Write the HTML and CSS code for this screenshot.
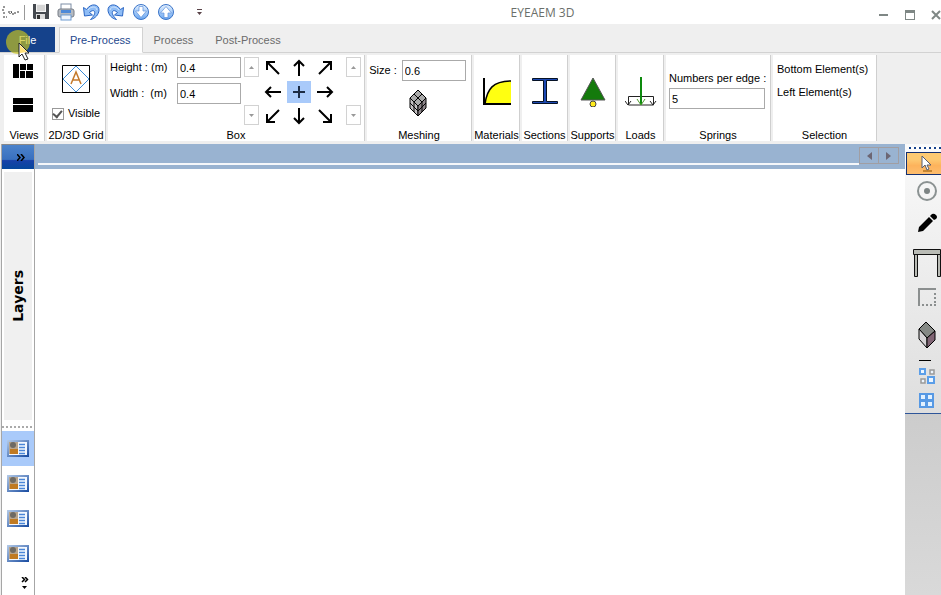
FILE: index.html
```html
<!DOCTYPE html>
<html lang="en">
<head>
    <meta charset="UTF-8">
    <meta name="viewport" content="width=device-width, initial-scale=1.0">
    <title>EYEAEM 3D</title>
    <link rel="stylesheet" href="styles.css">
</head>
<body>
    <svg class="defs" aria-hidden="true">
        <linearGradient id="blue" x1="0" y1="0" x2="0" y2="1">
            <stop offset="0" stop-color="#e6f2ff"/>
            <stop offset="1" stop-color="#68a5f0"/>
        </linearGradient>
        <linearGradient id="card-edge" x1="0" y1="0" x2="1" y2="1">
            <stop offset="0" stop-color="#b5cbe8"/>
            <stop offset="1" stop-color="#164aa0"/>
        </linearGradient>
        <symbol id="arrow" viewBox="0 0 18 18">
            <path d="M9 17V2M4 7l5-5 5 5" fill="none" stroke="#000" stroke-width="2"/>
        </symbol>
        <symbol id="arrow-diag" viewBox="0 0 18 18">
            <path d="M3 15L15 3M7 3h8v8" fill="none" stroke="#000" stroke-width="2"/>
        </symbol>
        <symbol id="undo" viewBox="0 0 18 18">
            <path d="M1.500 4.500l1 8.500 8-1-3-2.500c2-2 4-2.500 5-1 1 2-1 5-4 8 5-1 8-5 8.500-9C17.500 1 9-.5 4.500 6.500z" fill="#8fbdf6" stroke="#2b66c4"/>
            <path d="M6 7c3-4 8-4 9 0" fill="none" stroke="#d3e6fd"/>
        </symbol>
        <symbol id="card" viewBox="0 0 22 17">
            <rect width="22" height="17" fill="url(#card-edge)"/>
            <rect x="2" y="2" width="18" height="13" fill="#f4f8fe"/>
            <rect x="2" y="2" width="9" height="12" fill="#b9a58c"/>
            <circle cx="6" cy="5" r="3" fill="#6e6a63"/>
            <rect x="3" y="9" width="8" height="5" fill="#c07a22"/>
            <path d="M12 4.500h6M12 7.500h6M12 10.500h6M12 13.500h6" stroke="#4a86d8" stroke-width="1.500"/>
        </symbol>
    </svg>

    <header class="titlebar">
        <div class="quick">
            <svg class="logo" width="17" height="14" viewBox="0 0 17 14" aria-hidden="true">
                <path d="M1 2h3M0 5h2M1 8h3M1 12h4M6 7h2v2M9 6l1 3M10 9h2M13 7v2h1M16 6v3" fill="none" stroke="#333" stroke-dasharray="2 1"/>
            </svg>
            <span class="rule"></span>
            <button aria-label="Save">
                <svg width="18" height="18" viewBox="0 0 18 18">
                    <path d="M1 1h16v15H2l-1-1z" fill="#44484e"/>
                    <rect x="4" y="1" width="10" height="8" fill="#f5f5f5"/>
                    <path d="M5 3h8M5 5h8M5 7h8" stroke="#b5b5b5"/>
                    <rect x="4" y="11" width="9" height="5" fill="#dcdcdc"/>
                    <rect x="5" y="12" width="3" height="4" fill="#333"/>
                </svg>
            </button>
            <button aria-label="Print">
                <svg width="18" height="18" viewBox="0 0 18 18">
                    <rect x="4" y="1" width="10" height="7" fill="#fff" stroke="#7d8da5"/>
                    <rect x="1" y="6" width="16" height="8" rx="2" fill="#b5bac1" stroke="#777d86"/>
                    <rect x="4" y="7" width="10" height="3" fill="#4c89d8"/>
                    <rect x="4" y="12" width="10" height="5" fill="#eef5fd" stroke="#6e9bd0"/>
                </svg>
            </button>
            <button aria-label="Undo"><svg width="18" height="18"><use href="#undo"/></svg></button>
            <button aria-label="Redo"><svg class="flip" width="18" height="18"><use href="#undo"/></svg></button>
            <button aria-label="Download">
                <svg width="18" height="18" viewBox="0 0 18 18">
                    <circle cx="9" cy="9" r="7.500" fill="url(#blue)" stroke="#3b74c8"/>
                    <path d="M7 3.500h4V8h3.500L9 14.500 3.500 8H7z" fill="#fff" stroke="#5b8fdc" stroke-width=".7"/>
                </svg>
            </button>
            <button aria-label="Upload">
                <svg width="18" height="18" viewBox="0 0 18 18">
                    <circle cx="9" cy="9" r="7.500" fill="url(#blue)" stroke="#3b74c8"/>
                    <path d="M7 14.500h4V10h3.500L9 3.500 3.500 10H7z" fill="#fff" stroke="#5b8fdc" stroke-width=".7"/>
                </svg>
            </button>
            <button class="more" aria-label="Customize toolbar">
                <svg width="5" height="6" viewBox="0 0 5 6"><path d="M0 0h5v1H0zM0 3h5L2.500 6z" fill="#5a4348"/></svg>
            </button>
        </div>
        <h1>EYEAEM 3D</h1>
        <div class="window-buttons">
            <button aria-label="Minimize"><svg width="10" height="10"><path d="M0 4h9v2H0z" fill="#7f8785"/></svg></button>
            <button aria-label="Maximize"><svg width="10" height="10"><path d="M0 0h10v10H0zM1 3v6h8V3z" fill="#7f8785" fill-rule="evenodd"/></svg></button>
            <button aria-label="Close"><svg width="10" height="10"><path d="M1 1l8 8M9 1L1 9" stroke="#7f8785" stroke-width="2"/></svg></button>
        </div>
    </header>

    <nav class="tabs">
        <button class="file">File
            <svg class="pointer" width="26" height="34" viewBox="0 0 26 34" aria-hidden="true">
                <circle cx="12" cy="14" r="12" fill="#c8c21e" fill-opacity=".68"/>
                <path d="M13 15v14l3-3 3 6 3-1-3-6h4z" fill="#fff" stroke="#222"/>
                <path d="M14 17v8l7-1z" fill="#ffe07a"/>
            </svg>
        </button>
        <button class="active">Pre-Process</button>
        <button>Process</button>
        <button>Post-Process</button>
    </nav>

    <div class="ribbon">
        <section class="group views">
            <div class="body">
                <button aria-label="Tile views"><svg width="20" height="14"><path d="M0 0h6v14H0zM7 0h6v6H7zM14 0h6v6h-6zM7 7h5v7H7zM13 7h7v7h-7z"/></svg></button>
                <button aria-label="Stack views"><svg width="20" height="14"><path d="M0 0h20v6H0zM0 7h20v7H0z"/></svg></button>
            </div>
            <h2>Views</h2>
        </section>
        <section class="group grid">
            <div class="body">
                <button aria-label="Grid">
                    <svg width="28" height="28" viewBox="0 0 28 28" fill="none">
                        <path d="M.5.5h27v27H.5z" stroke="#000"/>
                        <path d="M14 1l13 13-13 13L1 14z" stroke="#3b8bd6"/>
                        <path d="M9 19l5-12 5 12M11 15h6" stroke="#c47a2c" stroke-width="1.500"/>
                    </svg>
                </button>
                <label><input type="checkbox" checked> Visible</label>
            </div>
            <h2>2D/3D Grid</h2>
        </section>
        <section class="group box">
            <div class="body">
                <div class="fields">
                    <label for="height">Height : (m)</label><input id="height" type="text" value="0.4">
                    <label for="width">Width :&nbsp; (m)</label><input id="width" type="text" value="0.4">
                </div>
                <div class="spin">
                    <button aria-label="Scroll up"><svg width="5" height="3"><path d="M0 3h5L2.500 0z"/></svg></button>
                    <button aria-label="Scroll down"><svg width="5" height="3"><path d="M0 0h5L2.500 3z"/></svg></button>
                </div>
                <div class="arrows">
                    <button aria-label="Up left"><svg class="r270" width="18" height="18"><use href="#arrow-diag"/></svg></button>
                    <button aria-label="Up"><svg width="18" height="18"><use href="#arrow"/></svg></button>
                    <button aria-label="Up right"><svg width="18" height="18"><use href="#arrow-diag"/></svg></button>
                    <button aria-label="Left"><svg class="r270" width="18" height="18"><use href="#arrow"/></svg></button>
                    <button class="on" aria-label="Center"><svg width="18" height="18"><path d="M9 3v12M3 9h12" stroke="#1c2b44" stroke-width="2"/></svg></button>
                    <button aria-label="Right"><svg class="r90" width="18" height="18"><use href="#arrow"/></svg></button>
                    <button aria-label="Down left"><svg class="turn" width="18" height="18"><use href="#arrow-diag"/></svg></button>
                    <button aria-label="Down"><svg class="turn" width="18" height="18"><use href="#arrow"/></svg></button>
                    <button aria-label="Down right"><svg class="r90" width="18" height="18"><use href="#arrow-diag"/></svg></button>
                </div>
                <div class="spin">
                    <button aria-label="Scroll up"><svg width="5" height="3"><path d="M0 3h5L2.500 0z"/></svg></button>
                    <button aria-label="Scroll down"><svg width="5" height="3"><path d="M0 0h5L2.500 3z"/></svg></button>
                </div>
            </div>
            <h2>Box</h2>
        </section>
        <section class="group meshing">
            <div class="body">
                <div class="row"><label for="size">Size :</label><input id="size" type="text" value="0.6"></div>
                <button aria-label="Mesh">
                    <svg width="18" height="28" viewBox="0 0 18 28" stroke="#000">
                        <path d="M9 1l8 8-8 8-8-8z" fill="#aaa"/>
                        <path d="M1 9l8 8v10l-8-8z" fill="#c4c0c2"/>
                        <path d="M17 9l-8 8v10l8-8z" fill="#8d858a"/>
                        <path d="M5 5l8 8v10M13 5l-8 8v10M1 14l8 8 8-8" fill="none"/>
                    </svg>
                </button>
            </div>
            <h2>Meshing</h2>
        </section>
        <section class="group tool">
            <div class="body">
                <button aria-label="Materials">
                    <svg width="28" height="30" viewBox="0 0 28 30">
                        <path d="M2 27C4 12 10 4 28 4v23z" fill="#ff1"/>
                        <path d="M2 27C4 12 10 4 28 4" fill="none" stroke="#000" stroke-width="1.500"/>
                        <path d="M1 1v26h27" fill="none" stroke="#000" stroke-width="2"/>
                    </svg>
                </button>
            </div>
            <h2>Materials</h2>
        </section>
        <section class="group tool">
            <div class="body">
                <button aria-label="Sections">
                    <svg width="28" height="30" viewBox="0 0 28 30">
                        <path d="M1.500 1.500h25v2h-11v21h11v2h-25v-2h11v-21h-11z" fill="#1c49b4" stroke="#061225"/>
                    </svg>
                </button>
            </div>
            <h2>Sections</h2>
        </section>
        <section class="group tool">
            <div class="body">
                <button aria-label="Supports">
                    <svg width="28" height="30" viewBox="0 0 28 30">
                        <path d="M14 1l12 22H2z" fill="#147a0c" stroke="#555"/>
                        <circle cx="14" cy="27" r="3" fill="#ffeb1c" stroke="#444"/>
                    </svg>
                </button>
            </div>
            <h2>Supports</h2>
        </section>
        <section class="group tool">
            <div class="body">
                <button aria-label="Loads">
                    <svg width="32" height="30" viewBox="0 0 32 30" fill="none">
                        <path d="M3.500 28V19.500h25V28zM0 24l3 4 3-4M25 24l3 4 3-4" stroke="#222"/>
                        <path d="M16 0v28" stroke="#0d8a0d" stroke-width="2"/>
                        <path d="M12 22l4 6 4-6" stroke="#4d9a2d"/>
                    </svg>
                </button>
            </div>
            <h2>Loads</h2>
        </section>
        <section class="group springs">
            <div class="body">
                <label for="edges">Numbers per edge :</label>
                <input id="edges" type="text" value="5">
            </div>
            <h2>Springs</h2>
        </section>
        <section class="group selection">
            <div class="body">
                <button>Bottom Element(s)</button>
                <button>Left Element(s)</button>
            </div>
            <h2>Selection</h2>
        </section>
    </div>

    <main>
        <aside class="sidebar">
            <button class="expand" aria-label="Expand panel"><svg width="8" height="7"><path d="M0 0l3 3.500-3 3.500M4 0l3 3.500-3 3.500" fill="none" stroke="#000" stroke-width="1.500"/></svg></button>
            <button class="layers">Layers</button>
            <div class="splitter"></div>
            <button class="item on" aria-label="Panel 1"><svg width="22" height="17"><use href="#card"/></svg></button>
            <button class="item" aria-label="Panel 2"><svg width="22" height="17"><use href="#card"/></svg></button>
            <button class="item" aria-label="Panel 3"><svg width="22" height="17"><use href="#card"/></svg></button>
            <button class="item" aria-label="Panel 4"><svg width="22" height="17"><use href="#card"/></svg></button>
            <button class="overflow" aria-label="More panels">
                <svg width="8" height="13"><path d="M1 0l2.500 2.500L1 5M4 0l2.500 2.500L4 5" fill="none" stroke="#000" stroke-width="1.500"/><path d="M1 9h5l-2.500 3z"/></svg>
            </button>
        </aside>
        <div class="workspace">
            <div class="docbar">
                <div class="line"></div>
                <div class="scroll">
                    <button aria-label="Previous"><svg width="5" height="8"><path d="M5 0v8L0 4z"/></svg></button>
                    <button aria-label="Next"><svg width="5" height="8"><path d="M0 0v8l5-4z"/></svg></button>
                </div>
            </div>
            <div class="canvas"></div>
        </div>
        <aside class="side-tools">
            <div class="tools">
                <div class="grip"></div>
                <button class="select" aria-label="Select">
                    <svg width="12" height="17" viewBox="0 0 12 17"><path d="M2 16h9" stroke="#c58532" stroke-width="2"/><path d="M1 1v12l3-3 2 5 2-1-2-4h4z" fill="#fff" stroke="#555c70"/></svg>
                </button>
                <button class="node" aria-label="Node">
                    <svg width="20" height="20"><circle cx="10" cy="10" r="9" fill="none" stroke="#8b9292" stroke-width="2"/><circle cx="10" cy="10" r="3" fill="#7d8484"/></svg>
                </button>
                <button class="pencil" aria-label="Draw">
                    <svg width="20" height="20"><path d="M1 19l1-5L12 4l4 4L6 18zM13 3l2-2q2-1 4 1t0 4l-2 1z"/></svg>
                </button>
                <button class="frame" aria-label="Frame">
                    <svg width="28" height="30"><path d="M.5 1.500h27v5h-27zM1.500 6.500h3v22h-3zM24.500 6.500h3v22h-3z" fill="#b9bbb5" stroke="#111"/></svg>
                </button>
                <button class="area" aria-label="Area">
                    <svg width="18" height="18" fill="none" stroke="#8b8f8f" stroke-width="2"><path d="M1 18V1h17"/><path d="M17 5v13M4 17h14" stroke-dasharray="2 2"/></svg>
                </button>
                <button class="solid" aria-label="Solid">
                    <svg width="18" height="28" viewBox="0 0 18 28" stroke="#000"><path d="M8 1l9 9-8 7-8-9z" fill="#858985"/><path d="M1 8l8 9v10l-8-9z" fill="#d5d3d5"/><path d="M17 10l-8 7v10l8-8z" fill="#806474"/></svg>
                </button>
                <hr>
                <button class="snap" aria-label="Snap">
                    <svg width="16" height="16" fill="#edf6ff" stroke-width="2"><path d="M1 1h5v5H1zM9 9h6v6H9z" stroke="#5b9ee8"/><path d="M11 2h4v4h-4zM2 11h4v4H2z" stroke="#999" stroke-width="1.500"/></svg>
                </button>
                <button class="cells" aria-label="Cells">
                    <svg width="15" height="15" fill="#e2f1ff" stroke="#5799e4" stroke-width="2"><path d="M1 1h6v6H1zM8 1h6v6H8zM1 8h6v6H1zM8 8h6v6H8z"/></svg>
                </button>
            </div>
        </aside>
    </main>
</body>
</html>
```

FILE: styles.css
```css
* {
    box-sizing: border-box;
}

body {
    margin: 0;
    height: 100vh;
    display: flex;
    flex-direction: column;
    background: #efefef;
    color: #000;
    font-family: "Liberation Sans", Arial, sans-serif;
    font-size: 11px;
    line-height: 13px;
    overflow: hidden;
}

button {
    display: flex;
    align-items: center;
    justify-content: center;
    padding: 0;
    border: 0;
    background: none;
    color: inherit;
    font: inherit;
}

input {
    font: inherit;
    color: inherit;
}

input[type="text"] {
    width: 64px;
    min-width: 0;
    height: 21px;
    padding: 0 2px;
    border: 1px solid #aaa;
    background: #fff;
}

h1,
h2 {
    margin: 0;
    font: inherit;
    text-align: center;
}

svg {
    display: block;
    flex: none;
}

.defs {
    position: absolute;
    width: 0;
    height: 0;
}

.flip {
    transform: scaleX(-1);
}

.turn {
    transform: rotate(180deg);
}

.r90 {
    transform: rotate(90deg);
}

.r270 {
    transform: rotate(270deg);
}

/* title bar */
.titlebar {
    display: grid;
    grid-template-columns: 1fr auto 1fr;
    align-items: center;
    height: 24px;
    background: #fff;
}

.titlebar h1 {
    padding-left: 144px;
    color: #6a6f6a;
    font-family: "Open Sans", sans-serif;
    font-size: 12px;
}

.quick {
    display: flex;
    align-items: center;
    gap: 7px;
    padding-left: 2px;
}

.quick .rule {
    width: 1px;
    height: 15px;
    margin-left: -2px;
    background: #999;
}

.quick .more {
    margin-left: 15px;
}

.window-buttons {
    display: flex;
    justify-content: flex-end;
    gap: 16px;
    padding-top: 5px;
}

/* tabs */
.tabs {
    display: flex;
    height: 29px;
    padding-top: 3px;
    border-bottom: 1px solid #d2d2d2;
    color: #6b6b6b;
}

.tabs button {
    padding: 2px 11px 0;
}

.tabs .file {
    position: relative;
    width: 55px;
    background: #15428b;
    color: #fff;
}

.tabs .active {
    height: 26px;
    margin-left: 4px;
    padding-top: 1px;
    padding-left: 10px;
    border: 1px solid #d2d2d2;
    border-bottom-color: #fff;
    background: #fff;
    color: #24478d;
}

.pointer {
    position: absolute;
    left: 6px;
    top: 1px;
    z-index: 1;
}

/* ribbon */
.ribbon {
    display: flex;
    gap: 2px;
    height: 91px;
    padding: 2px 4px 3px;
}

.group {
    display: flex;
    flex-direction: column;
    flex: none;
    border-right: 1px solid #cfcfcf;
    background: #fff;
    white-space: nowrap;
}

.group .body {
    display: flex;
    flex-direction: column;
    align-items: center;
    flex: 1;
}

.group h2 {
    height: 12px;
}

.views {
    width: 41px;
}

.views .body {
    gap: 20px;
    padding: 9px 2px 0 0;
}

.grid {
    width: 59px;
}

.grid .body {
    gap: 14px;
    padding-top: 10px;
}

.grid label {
    display: flex;
    align-items: center;
    gap: 4px;
}

.grid input {
    display: grid;
    place-items: center;
    width: 12px;
    height: 12px;
    margin: 0;
    appearance: none;
    border: 1px solid #999;
}

.grid input:checked::before {
    content: "";
    width: 7px;
    height: 4px;
    margin-bottom: 2px;
    border: solid #555;
    border-width: 0 0 2px 2px;
    transform: rotate(-50deg);
}

.box {
    width: 257px;
}

.box .body {
    flex-direction: row;
    align-items: flex-start;
    gap: 3px;
    padding: 2px 2px 0;
}

.fields {
    display: grid;
    grid-template-columns: 67px 64px;
    row-gap: 5px;
    align-items: center;
}

.spin {
    display: flex;
    flex-direction: column;
    justify-content: space-between;
    height: 68px;
}

.spin button {
    width: 15px;
    height: 20px;
    border: 1px solid #d2d2d2;
    fill: #999;
}

.arrows {
    display: grid;
    grid-template-columns: repeat(3, 24px);
    grid-auto-rows: 22px;
    gap: 2px;
    margin: 0 6px 0 -1px;
}

.arrows .on {
    background: #a9cafa;
}

.meshing,
.springs {
    width: 105px;
}

.meshing .body {
    gap: 8px;
    padding: 5px 3px 0 0;
}

.meshing .row {
    display: flex;
    align-items: center;
    gap: 5px;
}

.tool {
    width: 46px;
}

.tool .body {
    padding-top: 22px;
}

.springs .body {
    align-items: stretch;
    gap: 3px;
    padding: 17px 5px 0 3px;
}

.springs input[type="text"] {
    width: auto;
}

.selection {
    width: 104px;
}

.selection .body {
    align-items: flex-start;
    gap: 10px;
    padding: 8px 4px 0;
}

/* working area */
main {
    display: grid;
    grid-template-columns: 34px 1fr 36px;
    flex: 1;
    min-height: 0;
    padding-left: 1px;
}

.sidebar {
    display: flex;
    flex-direction: column;
    border: solid #a6a6a6;
    border-width: 0 1px;
    background: #fff;
}

.expand {
    height: 25px;
    padding-left: 6px;
    border-top: 1px solid #888;
    background: linear-gradient(#4c83cb, #3970bf 60%, #1741a8 65%, #05479c);
}

.layers {
    flex: 1;
    margin: 3px 2px 0;
    background: #f0f0f0;
    font-family: "DejaVu Sans", Verdana, sans-serif;
    font-size: 14px;
    font-weight: bold;
    writing-mode: sideways-lr;
}

.splitter {
    height: 11px;
    padding-top: 6px;
}

.splitter::before {
    content: "";
    display: block;
    height: 2px;
    background: repeating-linear-gradient(90deg, #aaa 0 2px, #fff 2px 4px);
}

.item {
    height: 35px;
}

.item.on {
    background: #a9cafa;
}

.overflow {
    height: 24px;
    padding-left: 14px;
}

.workspace {
    display: flex;
    flex-direction: column;
}

.docbar {
    display: flex;
    align-items: flex-start;
    height: 25px;
    padding: 3px 6px 0 3px;
    background: #99b3d1;
}

.docbar .line {
    flex: 1;
    height: 18px;
    border-bottom: 2px solid #f5f7fa;
}

.scroll {
    display: flex;
}

.scroll button {
    width: 20px;
    height: 17px;
    border: 1px solid #a09ea3;
    fill: #6c6673;
}

.scroll button + button {
    border-left: 0;
}

.canvas {
    flex: 1;
    background: #fff;
}

.side-tools {
    background: linear-gradient(#c9c9c9 50%, #d9d9d9);
}

.tools {
    display: flex;
    flex-direction: column;
    padding-left: 1px;
    border-bottom: 1px solid #2e5599;
    background: linear-gradient(#fafafa, #dedede);
}

.tools button {
    padding-left: 6px;
}

.grip {
    height: 2px;
    margin: 3px 0 3px 3px;
    background: repeating-linear-gradient(90deg, #15428b 0 2px, #fff 2px 5px);
}

.select {
    height: 23px;
    border: 1px solid #15306f;
    border-right: 0;
    background: linear-gradient(#fdca72 30%, #fdb35c 60%, #fdbd6d);
}

.node {
    height: 31px;
}

.pencil {
    height: 34px;
}

.frame {
    height: 45px;
}

.area {
    height: 24px;
}

.solid {
    height: 52px;
}

.tools hr {
    width: 12px;
    height: 1px;
    margin: -1px 0 0 13px;
    border: 0;
    background: #000;
}

.snap {
    height: 30px;
}

.cells {
    height: 22px;
    padding-bottom: 3px;
}
```
